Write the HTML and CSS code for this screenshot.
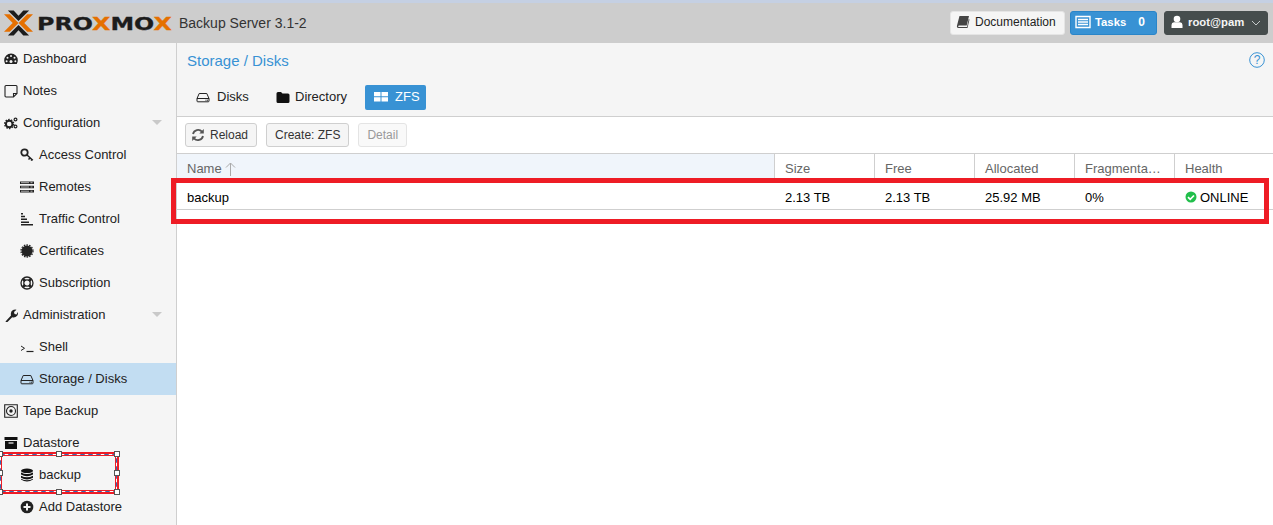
FILE: index.html
```html
<!DOCTYPE html>
<html lang="en">
<head>
<meta charset="utf-8">
<title>Proxmox Backup Server</title>
<link rel="stylesheet" href="styles.css">
</head>
<body>
<svg class="defs" width="0" height="0" aria-hidden="true">
  <symbol id="hdd" viewBox="0 0 14 14"><path d="M1 8.500 3.200 3.500h7.600L13 8.500V11a.8.8 0 0 1-.8.8H1.800A.8.8 0 0 1 1 11Z M1 8.500h12" fill="none" stroke="currentColor" stroke-width="1"/><path d="M9.500 10.200h1M11 10.200h1" stroke="currentColor" stroke-width="1"/></symbol>
  <symbol id="cog" viewBox="0 0 14 14"><circle cx="5.200" cy="8" r="3.300" fill="none" stroke="currentColor" stroke-width="2"/><circle cx="5.200" cy="8" r="4.500" fill="none" stroke="currentColor" stroke-width="1.400" stroke-dasharray="1.500 1.300"/><circle cx="11.500" cy="3.500" r="1.400" fill="none" stroke="currentColor" stroke-width="1.200"/><circle cx="11.500" cy="10.500" r="1.400" fill="none" stroke="currentColor" stroke-width="1.200"/></symbol>
</svg>

<div class="page">
  <header class="topbar">
    <div class="brand">
      <svg class="logo-mark" viewBox="0 0 30 26"><path d="M0 4h6l9 9-9 9H0l9-9ZM30 4h-6l-9 9 9 9h6l-9-9Z" fill="#e57000"/><path d="M4 0h6l5 5.500L20 0h6L15 11ZM4 26h6l5-5.500 5 5.500h6L15 15Z" fill="#1c1c1c"/></svg>
      <span class="wordmark"><span class="wordmark-text">PRO<em>X</em>MO<em>X</em></span></span>
      <span class="version">Backup Server 3.1-2</span>
    </div>
    <div class="top-actions">
      <button class="top-btn doc-btn">
        <svg class="ic" viewBox="0 0 14 14"><path d="M3.500 1H13l-2.300 9.500H3a1 1 0 0 0-.6 1.500H11l1.700-8 .8.500L11.500 13H2.500Q.5 13 1 10.500Z" fill="#444"/></svg>
        Documentation
      </button>
      <button class="top-btn task-btn">
        <svg class="ic ic-tasks" viewBox="0 0 16 14"><path d="M1 1.500h14v11H1Z" fill="none" stroke="#fff" stroke-width="1.400"/><path d="M3 4.500h10M3 7h10M3 9.500h10" stroke="#fff" stroke-width="1.300"/></svg>
        <span>Tasks</span><span class="count">0</span>
      </button>
      <button class="top-btn user-btn">
        <svg class="ic" viewBox="0 0 12 14"><circle cx="6" cy="4" r="3.300" fill="#fff"/><path d="M.5 13V10q0-2.500 2.500-2.700h6q2.500.2 2.500 2.700v3Z" fill="#fff"/></svg>
        <span>root@pam</span>
        <svg class="chev" viewBox="0 0 10 6"><path d="M1 1l4 4 4-4" fill="none" stroke="#c4c9c9" stroke-width="1"/></svg>
      </button>
    </div>
  </header>

  <div class="main">
    <nav class="sidebar">
      <div class="nav-item">
        <svg class="ic" viewBox="0 0 14 14"><path d="M7 1.500A6.800 6.800 0 0 0 .2 8.300q0 2.200 1.100 3.700h11.400q1.100-1.500 1.100-3.700A6.800 6.800 0 0 0 7 1.500Z" fill="#222"/><circle cx="7" cy="4" r="1" fill="#f5f5f5"/><circle cx="3.500" cy="5.700" r="1" fill="#f5f5f5"/><circle cx="10.500" cy="5.700" r="1" fill="#f5f5f5"/><circle cx="2.600" cy="9.200" r="1" fill="#f5f5f5"/><circle cx="11.400" cy="9.200" r="1" fill="#f5f5f5"/><circle cx="7" cy="9.500" r="1.500" fill="#f5f5f5"/></svg>
        <span>Dashboard</span>
      </div>
      <div class="nav-item">
        <svg class="ic" viewBox="0 0 14 14"><path d="M2 1.500h10a1 1 0 0 1 1 1v7L9.500 13H2a1 1 0 0 1-1-1V2.500a1 1 0 0 1 1-1Z M9.500 13V9.500H13" fill="none" stroke="#222" stroke-width="1.100"/></svg>
        <span>Notes</span>
      </div>
      <div class="nav-item">
        <svg class="ic" viewBox="0 0 14 14"><use href="#cog"/></svg>
        <span>Configuration</span><i class="caret"></i>
      </div>
      <div class="nav-item sub">
        <svg class="ic" viewBox="0 0 14 14"><circle cx="4.500" cy="4.500" r="3.200" fill="none" stroke="#222" stroke-width="1.800"/><path d="M7 7l5.800 5.300M10 10l-1.500 1.500M12 11.500l-1 1" fill="none" stroke="#222" stroke-width="1.500"/></svg>
        <span>Access Control</span>
      </div>
      <div class="nav-item sub">
        <svg class="ic" viewBox="0 0 14 14"><path d="M0 1.500h14v2.500H0ZM0 5.800h14v2.500H0ZM0 10h14v2.500H0Z" fill="#222"/><path d="M1 2.700h8M10.500 2.700h2M1 7h8M10.500 7h2M1 11.200h8M10.500 11.200h2" stroke="#f5f5f5" stroke-width=".7"/></svg>
        <span>Remotes</span>
      </div>
      <div class="nav-item sub">
        <svg class="ic" viewBox="0 0 14 14"><path d="M1 1h2v1.500H1ZM1 3.800h4v1.500H1ZM1 6.600h6v1.500H1ZM1 9.400h8v1.500H1ZM1 12h12v1.500H1Z" fill="#222"/></svg>
        <span>Traffic Control</span>
      </div>
      <div class="nav-item sub">
        <svg class="ic" viewBox="0 0 14 14"><circle cx="7" cy="7" r="5.500" fill="#222"/><circle cx="7" cy="7" r="6" fill="none" stroke="#222" stroke-width="1.300" stroke-dasharray="1.500 1.200"/></svg>
        <span>Certificates</span>
      </div>
      <div class="nav-item sub">
        <svg class="ic" viewBox="0 0 14 14"><circle cx="7" cy="7" r="6" fill="none" stroke="#222" stroke-width="1.300"/><circle cx="7" cy="7" r="3.200" fill="none" stroke="#222" stroke-width="1.300"/><path d="M3 3l2 2M11 3L9 5M3 11l2-2M11 11L9 9" stroke="#222" stroke-width="2.600"/></svg>
        <span>Subscription</span>
      </div>
      <div class="nav-item">
        <svg class="ic" viewBox="0 0 14 14"><path d="M1.500 13.500 7 7.500Q6.200 3.500 9 2q1.800-.8 3.500-.2L10 4l.5 2 2 .5 1.300-2.500q.6 2-.6 3.800-2 2.300-5 1.500L3.500 14Q2 14.500 1.500 13.500Z" fill="#222"/></svg>
        <span>Administration</span><i class="caret"></i>
      </div>
      <div class="nav-item sub">
        <svg class="ic" viewBox="0 0 14 14"><path d="M1 6l3.500 2.300L1 10.500" fill="none" stroke="#222" stroke-width="1"/><path d="M6.500 11.500h7" stroke="#222" stroke-width="1.200"/></svg>
        <span>Shell</span>
      </div>
      <div class="nav-item sub selected">
        <svg class="ic" viewBox="0 0 14 14"><use href="#hdd"/></svg>
        <span>Storage / Disks</span>
      </div>
      <div class="nav-item">
        <svg class="ic" viewBox="0 0 14 14"><path d="M.7.700h12.600v12.600H.7Z" fill="none" stroke="#222" stroke-width="1.100"/><circle cx="7" cy="7" r="4.500" fill="none" stroke="#222" stroke-width="1.100"/><circle cx="7" cy="7" r="1.700" fill="#222"/></svg>
        <span>Tape Backup</span>
      </div>
      <div class="nav-item">
        <svg class="ic" viewBox="0 0 14 14"><path d="M.5 1h13v3H.5Z M1 5h12v8H1Z" fill="#111"/><path d="M4.500 7h5" stroke="#f5f5f5" stroke-width="1.200"/></svg>
        <span>Datastore</span>
      </div>
      <div class="nav-item sub">
        <svg class="ic" viewBox="0 0 14 14"><ellipse cx="7" cy="2.800" rx="6" ry="2.300" fill="#111"/><path d="M1 4.500q6 3.200 12 0v2q-6 3.400-12 0ZM1 7.700q6 3.200 12 0v2q-6 3.400-12 0ZM1 10.700q6 3.200 12 0v.8q-6 3.900-12 0Z" fill="#111"/></svg>
        <span>backup</span>
      </div>
      <div class="nav-item sub">
        <svg class="ic" viewBox="0 0 14 14"><circle cx="7" cy="7" r="6.300" fill="#222"/><path d="M7 3.500v7M3.500 7h7" stroke="#f5f5f5" stroke-width="2"/></svg>
        <span>Add Datastore</span>
      </div>
    </nav>

    <section class="content">
      <div class="title-bar">
        <h1>Storage / Disks</h1>
        <svg class="help" viewBox="0 0 16 16"><circle cx="8" cy="8" r="7.300" fill="none" stroke="#3892d4" stroke-width="1"/><text x="8" y="12" text-anchor="middle" class="help-q">?</text></svg>
      </div>
      <div class="tabs">
        <div class="tab"><svg class="ic" viewBox="0 0 14 14"><use href="#hdd"/></svg><span>Disks</span></div>
        <div class="tab"><svg class="ic" viewBox="0 0 14 14"><path d="M.5 3.500Q.5 2 2 2h3l1.500 1.500H12q1.500 0 1.500 1.500v6.500Q13.500 13 12 13H2Q.5 13 .5 11.500Z" fill="#111"/></svg><span>Directory</span></div>
        <div class="tab active"><svg class="ic" viewBox="0 0 14 14"><path d="M0 2h6.500v4.300H0ZM7.500 2H14v4.300H7.500ZM0 7.300h6.500v4.300H0ZM7.500 7.300H14v4.300H7.500Z" fill="#fff"/></svg><span>ZFS</span></div>
      </div>
      <div class="toolbar">
        <button class="tbtn"><svg class="ic" viewBox="0 0 14 14"><path d="M2 6a5.200 5.200 0 0 1 9-2.300M12 8a5.200 5.200 0 0 1-9 2.300" fill="none" stroke="#555" stroke-width="1.800"/><path d="M12.800 1v4.500H8.300ZM1.200 13V8.500h4.500Z" fill="#555"/></svg><span>Reload</span></button>
        <button class="tbtn">Create: ZFS</button>
        <button class="tbtn disabled">Detail</button>
      </div>
      <div class="grid">
        <div class="grid-row grid-head">
          <div class="cell name sorted">Name <svg class="sort" viewBox="0 0 11 14"><path d="M5.500 1v13M1 5.500l4.500-4.500L10 5.500" fill="none" stroke="#aaa" stroke-width="1"/></svg></div>
          <div class="cell">Size</div>
          <div class="cell">Free</div>
          <div class="cell">Allocated</div>
          <div class="cell">Fragmenta…</div>
          <div class="cell last">Health</div>
        </div>
        <div class="grid-row grid-body">
          <div class="cell name">backup</div>
          <div class="cell">2.13 TB</div>
          <div class="cell">2.13 TB</div>
          <div class="cell">25.92 MB</div>
          <div class="cell">0%</div>
          <div class="cell last status"><svg class="ok" viewBox="0 0 12 12"><circle cx="6" cy="6" r="5.500" fill="#21bf4b"/><path d="M3 6.200l2.200 2.200L9 4.500" fill="none" stroke="#fff" stroke-width="1.700"/></svg>ONLINE</div>
        </div>
      </div>
    </section>
  </div>

  <div class="mark mark-row"></div>
  <div class="mark-side">
    <svg class="mark-dash" viewBox="0 0 117 38"><rect x=".5" y=".5" width="116" height="37" class="dash-white"/><rect x=".5" y=".5" width="116" height="37" class="dash-blue"/></svg>
    <i class="h tl"></i><i class="h tc"></i><i class="h tr"></i><i class="h ml"></i><i class="h mr"></i><i class="h bl"></i><i class="h bc"></i><i class="h br"></i>
  </div>
</div>
</body>
</html>
```
FILE: styles.css
```css
* { box-sizing: border-box; }
html, body { margin: 0; height: 100%; overflow: hidden; background: #fff; }
body { font-family: "Liberation Sans", Arial, sans-serif; font-size: 13px; color: #222; }
.defs { position: absolute; }
.page { position: relative; height: 525px; display: flex; flex-direction: column; border-top: 3px solid #c5d0e3; overflow: hidden; }
.ic { width: 14px; height: 14px; flex: none; display: block; }

.topbar { height: 40px; flex: none; background: #cdcdcd; display: flex; align-items: center; justify-content: space-between; padding: 0 5px 0 4px; }
.brand { display: flex; align-items: center; }
.logo-mark { width: 29px; height: 26px; flex: none; }
.wordmark { font-family: "DejaVu Sans", sans-serif; font-weight: 700; font-size: 18px; color: #1c1c1c; margin-left: 4px; width: 134px; white-space: nowrap; }
.wordmark-text { display: inline-block; transform: scaleX(1.32); transform-origin: left center; -webkit-text-stroke: .3px currentColor; }
.wordmark em { font-style: normal; color: #e57000; }
.version { font-size: 14px; color: #333; margin-left: 8px; }
.top-actions { display: flex; align-items: center; gap: 5px; margin-top: -1px; }
.top-btn { height: 24px; border-radius: 3px; border: 1px solid transparent; display: flex; align-items: center; font: 12px "Liberation Sans", Arial, sans-serif; padding: 0 0 1px; }
.doc-btn { width: 115px; background: #f5f5f5; border-color: #e5e5e5; color: #222; padding-left: 5px; gap: 5px; }
.task-btn { width: 87px; background: #3892d4; border-color: #2a85c8; color: #fff; font-weight: 700; font-size: 11.300px; padding-left: 4px; }
.task-btn .ic-tasks { width: 16px; height: 14px; margin-right: 4px; }
.task-btn .count { margin-left: 12px; font-size: 12px; }
.user-btn { width: 104px; margin-left: 2px; background: #464d4d; border-color: #464d4d; color: #f5f5f5; font-weight: 700; font-size: 11.300px; padding-left: 6px; }
.user-btn .ic { width: 12px; height: 14px; margin-right: 5px; }
.chev { width: 10px; height: 6px; margin-left: 7px; margin-top: 2px; }

.main { flex: 1; display: flex; min-height: 0; }
.sidebar { width: 177px; flex: none; background: #f5f5f5; border-right: 1px solid #cfcfcf; }
.nav-item { height: 32px; display: flex; align-items: center; padding-left: 4px; gap: 5px; color: #222; padding-bottom: 1px; }
.nav-item.sub { padding-left: 20px; }
.nav-item.selected { background: #c2ddf2; }
.caret { margin-left: auto; margin-right: 14px; width: 0; height: 0; border-left: 5px solid transparent; border-right: 5px solid transparent; border-top: 5px solid #c9c9c9; }

.content { flex: 1; min-width: 0; display: flex; flex-direction: column; }
.title-bar { height: 36px; flex: none; background: #f5f5f5; display: flex; align-items: center; justify-content: space-between; padding: 0 8px 2px 10px; }
h1 { margin: 0; font-size: 15px; font-weight: 400; color: #3892d4; }
.help { width: 16px; height: 16px; }
.help-q { font: 12px "Liberation Sans", Arial, sans-serif; fill: #3892d4; }
.tabs { height: 38px; flex: none; background: #f5f5f5; border-bottom: 1px solid #cfcfcf; display: flex; gap: 2px; padding: 6px 0 0 10px; align-items: flex-start; }
.tab { height: 25px; display: flex; align-items: center; gap: 7px; padding: 0 9px 2px; border-radius: 2px; color: #222; }
.tab:nth-child(1) { width: 78px; }
.tab:nth-child(2) { width: 96px; gap: 5px; }
.tab.active { width: 61px; background: #3892d4; color: #fff; }
.toolbar { height: 37px; flex: none; background: #fff; display: flex; align-items: center; gap: 9px; padding: 0 0 0 8px; border-bottom: 1px solid #cfcfcf; }
.tbtn { height: 24px; padding: 0 8px; display: flex; align-items: center; gap: 5px; background: #f5f5f5; border: 1px solid #cfcfcf; border-radius: 3px; font: 12px "Liberation Sans", Arial, sans-serif; color: #333; }
.tbtn:first-child { padding-left: 5px; }
.tbtn.disabled { color: #999; background: #f9f9f9; border-color: #e4e4e4; }

.grid { flex: 1; background: #fff; }
.grid-row { display: flex; }
.cell { width: 100px; flex: none; padding: 0 10px; display: flex; align-items: center; white-space: nowrap; }
.cell.name { width: 598px; }
.cell.last { width: 98px; }
.grid-head { height: 28px; }
.grid-head .cell { color: #666; border-right: 1px solid #cfcfcf; padding-top: 1px; }
.grid-head .cell.last { border-right: 0; }
.grid-head .sorted { background: #f0f5fb; }
.sort { width: 11px; height: 14px; margin-left: 3px; }
.grid-body { height: 28px; border-bottom: 1px solid #cfcfcf; color: #000; }
.grid-body .cell { padding-top: 3px; }
.ok { width: 12px; height: 12px; margin-right: 3px; }

.mark { border: 5px solid #ee1c25; pointer-events: none; }
.mark-row { position: absolute; left: 171px; top: 175px; width: 1098px; height: 46px; }
.mark-side { position: absolute; left: -2px; top: 449px; width: 121px; height: 42px; border: 4px solid #ee1c25; pointer-events: none; }
.mark-dash { position: absolute; left: -2px; top: -2px; width: 117px; height: 38px; overflow: visible; fill: none; }
.dash-white { stroke: #fff; stroke-width: 1; stroke-dasharray: 4 4; stroke-dashoffset: 4; }
.dash-blue { stroke: #2f6fb5; stroke-width: 1; stroke-dasharray: 4 4; }
.h { position: absolute; z-index: 1; width: 6px; height: 6px; background: #fff; border: 1px solid #555; }
.tl { left: -5px; top: -5px; } .tc { left: calc(50% - 3px); top: -5px; } .tr { right: -5px; top: -5px; }
.ml { left: -5px; top: calc(50% - 3px); } .mr { right: -5px; top: calc(50% - 3px); }
.bl { left: -5px; bottom: -5px; } .bc { left: calc(50% - 3px); bottom: -5px; } .br { right: -5px; bottom: -5px; }
```
